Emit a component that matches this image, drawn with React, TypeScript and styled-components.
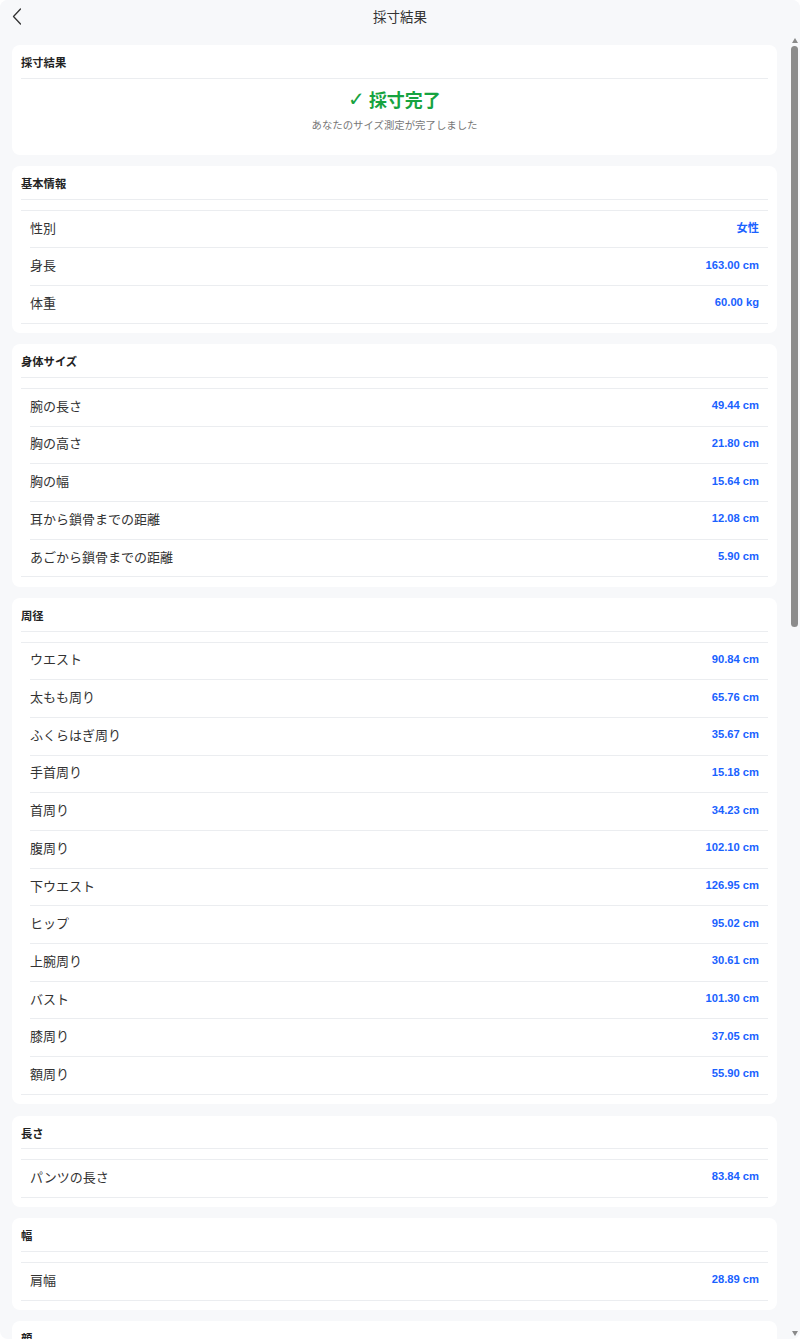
import React, { useEffect, useRef, useState } from "react";
import styled, { createGlobalStyle } from "styled-components";

const GlobalStyle = createGlobalStyle`
  html, body {
    margin: 0;
    padding: 0;
    background: #ffffff;
  }
  body {
    font-family: "Noto Sans CJK JP", "Noto Sans", sans-serif;
    color: #323233;
  }
  * { box-sizing: border-box; }
`;

const Screen = styled.div`
  height: 100vh;
  display: flex;
  flex-direction: column;
  background: #f7f8fa;
  border-radius: 8px;
  overflow: hidden;
`;

const NavBar = styled.header`
  flex: 0 0 35px;
  display: grid;
  grid-template-columns: 40px 1fr 40px;
  align-items: start;
  background: #f7f8fa;
`;

const BackButton = styled.button`
  height: 32px;
  border: none;
  background: none;
  padding: 0 0 0 12px;
  display: flex;
  align-items: center;
  cursor: pointer;
`;

const NavTitle = styled.h1`
  margin: 0;
  text-align: center;
  font-size: 13.5px;
  font-weight: 400;
  line-height: 32px;
  color: #333333;
`;

const Body = styled.div`
  position: relative;
  flex: 1 1 0;
  min-height: 0;
`;

const Scroller = styled.main`
  height: 100%;
  overflow-y: auto;
  scrollbar-width: none;
  padding: 10px 23px 62px 12px;
  display: flex;
  flex-direction: column;
  gap: 11.2px;

  &::-webkit-scrollbar {
    display: none;
  }
`;

/* custom scroll rail drawn over the right edge of the body */
const Rail = styled.div`
  position: absolute;
  top: 0;
  right: 0;
  bottom: 0;
  width: 11px;
  display: flex;
  flex-direction: column;
  align-items: center;
  pointer-events: none;
`;

const RailArrow = styled.div<{ $down?: boolean }>`
  flex: 0 0 11px;
  display: flex;
  align-items: center;
  justify-content: center;

  &::after {
    content: "";
    width: 0;
    height: 0;
    border-left: 3.5px solid transparent;
    border-right: 3.5px solid transparent;
    ${(p) =>
      p.$down
        ? "border-top: 5px solid #8a8a8a;"
        : "border-bottom: 5px solid #8a8a8a;"}
  }
`;

const RailTrack = styled.div`
  position: relative;
  flex: 1 1 auto;
  width: 100%;
`;

const RailThumb = styled.div`
  position: absolute;
  left: 2px;
  right: 2px;
  border-radius: 4px;
  background: #8c8c8c;
`;

const Card = styled.section`
  background: #ffffff;
  border-radius: 8px;
  padding: 0 9px 9.5px;
  flex-shrink: 0;
`;

const CardTitle = styled.h2`
  margin: 0;
  height: 33.5px;
  padding-top: 1.5px;
  display: flex;
  align-items: center;
  font-size: 11.3px;
  font-weight: 700;
  color: #222222;
  border-bottom: 1px solid #ebedf0;
`;

const ResultBody = styled.div`
  padding: 8px 0 14px;
  text-align: center;
`;

const ResultHeadline = styled.div`
  display: flex;
  justify-content: center;
  align-items: center;
  gap: 4px;
  font-size: 18px;
  line-height: 24px;
  font-weight: 700;
  color: #17a340;
`;

const CheckGlyph = styled.span`
  font-family: "DejaVu Sans", sans-serif;
  font-size: 20px;
  font-weight: 700;
`;

const ResultNote = styled.p`
  margin: 7px 0 0;
  font-size: 10.4px;
  line-height: 14px;
  color: #777777;
`;

const List = styled.div`
  margin-top: 10px;
  border-top: 1px solid #ebedf0;
  border-bottom: 1px solid #ebedf0;
`;

const Row = styled.div`
  position: relative;
  height: 36.7px;
  display: flex;
  align-items: center;
  justify-content: space-between;
  padding: 0 9px 4px;

  & + & {
    margin-top: 1px;
  }
  & + &::before {
    content: "";
    position: absolute;
    top: -1px;
    left: 9px;
    right: 0;
    border-top: 1px solid #ebedf0;
  }
`;

const Label = styled.span`
  font-size: 13px;
  color: #333333;
`;

const Value = styled.span`
  font-family: "Liberation Sans", "Noto Sans CJK JP", Arial, sans-serif;
  font-size: 11.2px;
  font-weight: 700;
  color: #1a62ff;
`;

type Item = [string, string];

const sections: { title: string; items: Item[] }[] = [
  {
    title: "基本情報",
    items: [
      ["性別", "女性"],
      ["身長", "163.00 cm"],
      ["体重", "60.00 kg"],
    ],
  },
  {
    title: "身体サイズ",
    items: [
      ["腕の長さ", "49.44 cm"],
      ["胸の高さ", "21.80 cm"],
      ["胸の幅", "15.64 cm"],
      ["耳から鎖骨までの距離", "12.08 cm"],
      ["あごから鎖骨までの距離", "5.90 cm"],
    ],
  },
  {
    title: "周径",
    items: [
      ["ウエスト", "90.84 cm"],
      ["太もも周り", "65.76 cm"],
      ["ふくらはぎ周り", "35.67 cm"],
      ["手首周り", "15.18 cm"],
      ["首周り", "34.23 cm"],
      ["腹周り", "102.10 cm"],
      ["下ウエスト", "126.95 cm"],
      ["ヒップ", "95.02 cm"],
      ["上腕周り", "30.61 cm"],
      ["バスト", "101.30 cm"],
      ["膝周り", "37.05 cm"],
      ["額周り", "55.90 cm"],
    ],
  },
  {
    title: "長さ",
    items: [["パンツの長さ", "83.84 cm"]],
  },
  {
    title: "幅",
    items: [["肩幅", "28.89 cm"]],
  },
  {
    title: "顔",
    items: [
      ["顔の長さ", "21.35 cm"],
      ["顔の幅", "14.72 cm"],
      ["頭周り", "55.40 cm"],
    ],
  },
  {
    title: "脚",
    items: [
      ["股下", "72.15 cm"],
      ["膝下の長さ", "45.30 cm"],
      ["足首周り", "22.64 cm"],
      ["足の長さ", "23.80 cm"],
    ],
  },
  {
    title: "上半身",
    items: [
      ["背丈", "38.92 cm"],
      ["袖丈", "56.18 cm"],
      ["前腕の長さ", "24.07 cm"],
      ["背中の幅", "34.56 cm"],
    ],
  },
  {
    title: "下半身",
    items: [
      ["股上", "26.40 cm"],
      ["太もも幅", "20.85 cm"],
      ["膝の高さ", "47.12 cm"],
      ["ふくらはぎの高さ", "33.58 cm"],
    ],
  },
  {
    title: "足",
    items: [
      ["足の幅", "9.35 cm"],
      ["足囲", "23.10 cm"],
      ["かかと周り", "31.46 cm"],
    ],
  },
  {
    title: "手",
    items: [
      ["手の長さ", "17.62 cm"],
      ["手の幅", "7.85 cm"],
      ["中指の長さ", "7.40 cm"],
    ],
  },
  {
    title: "胴",
    items: [
      ["胴の長さ", "45.72 cm"],
      ["背中の長さ", "40.16 cm"],
      ["脇の高さ", "118.34 cm"],
    ],
  },
  {
    title: "姿勢",
    items: [
      ["肩の傾き", "2.10 °"],
      ["首の傾き", "4.35 °"],
      ["骨盤の傾き", "1.82 °"],
    ],
  },
];

const ChevronLeft = () => (
  <svg width="10" height="17" viewBox="0 0 10 17" fill="none">
    <polyline
      points="8.5,1 1.5,8.5 8.5,16"
      stroke="#333"
      strokeWidth="1.3"
      strokeLinecap="round"
      strokeLinejoin="round"
    />
  </svg>
);

function useThumb(ref: React.RefObject<HTMLElement | null>) {
  const [thumb, setThumb] = useState({ top: 0, size: 0 });
  useEffect(() => {
    const el = ref.current;
    if (!el) return;
    const update = () => {
      const track = el.clientHeight - 22;
      const ratio = el.clientHeight / el.scrollHeight;
      const size = Math.max(20, track * ratio);
      const max = el.scrollHeight - el.clientHeight;
      const top = max > 0 ? (el.scrollTop / max) * (track - size) : 0;
      setThumb({ top, size });
    };
    update();
    el.addEventListener("scroll", update);
    window.addEventListener("resize", update);
    return () => {
      el.removeEventListener("scroll", update);
      window.removeEventListener("resize", update);
    };
  }, [ref]);
  return thumb;
}

export default function App() {
  const scrollRef = useRef<HTMLElement | null>(null);
  const thumb = useThumb(scrollRef);

  return (
    <>
      <GlobalStyle />
      <Screen>
        <NavBar>
          <BackButton aria-label="戻る">
            <ChevronLeft />
          </BackButton>
          <NavTitle>採寸結果</NavTitle>
          <span />
        </NavBar>
        <Body>
          <Scroller ref={scrollRef}>
            <Card>
              <CardTitle>採寸結果</CardTitle>
              <ResultBody>
                <ResultHeadline>
                  <CheckGlyph>✓</CheckGlyph>
                  <span>採寸完了</span>
                </ResultHeadline>
                <ResultNote>あなたのサイズ測定が完了しました</ResultNote>
              </ResultBody>
            </Card>
            {sections.map((s) => (
              <Card key={s.title}>
                <CardTitle>{s.title}</CardTitle>
                <List>
                  {s.items.map(([label, value]) => (
                    <Row key={label}>
                      <Label>{label}</Label>
                      <Value>{value}</Value>
                    </Row>
                  ))}
                </List>
              </Card>
            ))}
          </Scroller>
          <Rail aria-hidden="true">
            <RailArrow />
            <RailTrack>
              {thumb.size > 0 && (
                <RailThumb style={{ top: thumb.top, height: thumb.size }} />
              )}
            </RailTrack>
            <RailArrow $down />
          </Rail>
        </Body>
      </Screen>
    </>
  );
}
